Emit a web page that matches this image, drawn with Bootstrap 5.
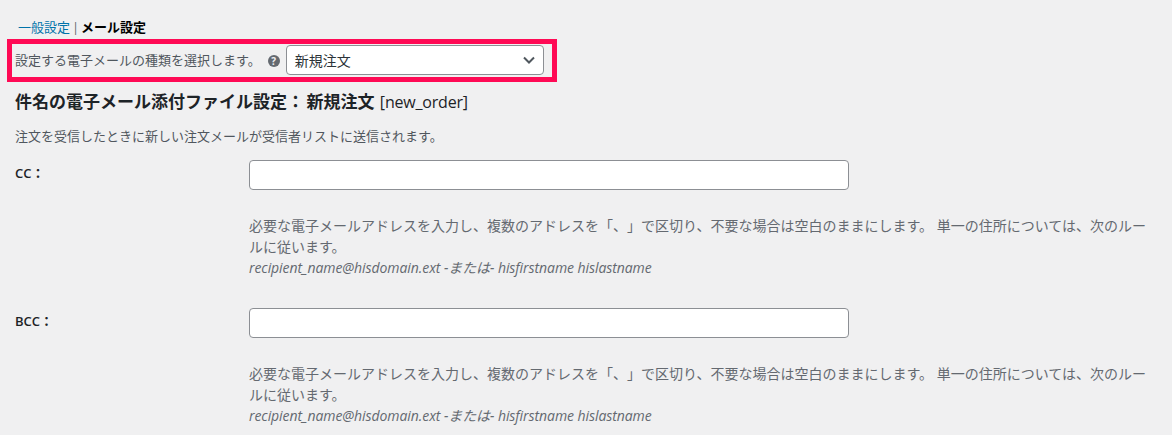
<!DOCTYPE html>
<html lang="ja"><head><meta charset="utf-8">
<link href="https://cdn.jsdelivr.net/npm/bootstrap@5.3.0/dist/css/bootstrap.min.css" rel="stylesheet">
<style>
html,body{height:435px;overflow:hidden}
body{background:#f0f0f1;color:#50575e;font-family:"Open Sans","Noto Sans CJK JP",sans-serif;font-size:13px;line-height:21px;text-spacing-trim:space-all}
.pg{padding:17px 16px 0 15px}
.crumbs{padding-left:3px;height:19px;margin-bottom:3px;color:#646970;word-spacing:-1.5px}
.crumbs a{color:#0073aa;text-decoration:none}
.crumbs b{color:#000;font-weight:700}
.picker{border:5px solid #ff0a55;margin:0 0 0 -8px;width:550px;height:43px;padding-left:3px}
.picker .hint{width:12px;height:12px;border-radius:50%;background:#646970;color:#f0f0f1;font-size:10px;line-height:12px;text-align:center;font-weight:700;margin-left:7px;margin-right:6px}
.sel{width:258px;height:30px;margin-bottom:1px;border:1px solid #8c8f94;border-radius:4px;background:#fff;padding:0 8px;font-size:14px;color:#2c3338}
.ttl{font-size:17px;font-weight:700;color:#1d2327;margin:8px 0 0;line-height:24px;word-spacing:-2px}
.ttl span{font-weight:400;font-size:16px;letter-spacing:-.2px;margin-left:3px}
.desc0{margin:12px 0 0;line-height:21px}
.frow{margin-top:13px}
.lab{width:234px;font-weight:600;color:#1d2327;padding-top:3px;flex:none}
.inp{width:600px;height:30px;border:1px solid #8c8f94;border-radius:4px;background:#fff;display:block}
.note{margin:25px 0 0;color:#646970;line-height:21px;font-size:14px}
.note i{display:block;letter-spacing:-.07px}
.frow2{margin-top:30px}
</style></head><body>
<div class="pg">
<div class="crumbs"><a href="#">一般設定</a> | <b>メール設定</b></div>
<div class="picker d-flex align-items-center"><span>設定する電子メールの種類を選択します。</span><span class="hint">?</span>
<div class="sel d-flex align-items-center justify-content-between"><span>新規注文</span><svg width="12" height="8" viewBox="0 0 12 8"><path d="M1 1.5l5 5 5-5" fill="none" stroke="#50575e" stroke-width="2"/></svg></div></div>
<h2 class="ttl">件名の電子メール添付ファイル設定： 新規注文 <span>[new_order]</span></h2>
<p class="desc0">注文を受信したときに新しい注文メールが受信者リストに送信されます。</p>
<div class="frow d-flex"><div class="lab">CC：</div><div><input class="inp" type="text">
<p class="note">必要な電子メールアドレスを入力し、複数のアドレスを「、」で区切り、不要な場合は空白のままにします。 単一の住所については、次のルールに従います。<i>recipient_name@hisdomain.ext -または- hisfirstname hislastname</i></p></div></div>
<div class="frow frow2 d-flex"><div class="lab">BCC：</div><div><input class="inp" type="text">
<p class="note">必要な電子メールアドレスを入力し、複数のアドレスを「、」で区切り、不要な場合は空白のままにします。 単一の住所については、次のルールに従います。<i>recipient_name@hisdomain.ext -または- hisfirstname hislastname</i></p></div></div>
</div>
<script src="https://cdn.jsdelivr.net/npm/bootstrap@5.3.0/dist/js/bootstrap.bundle.min.js"></script>
</body></html>
